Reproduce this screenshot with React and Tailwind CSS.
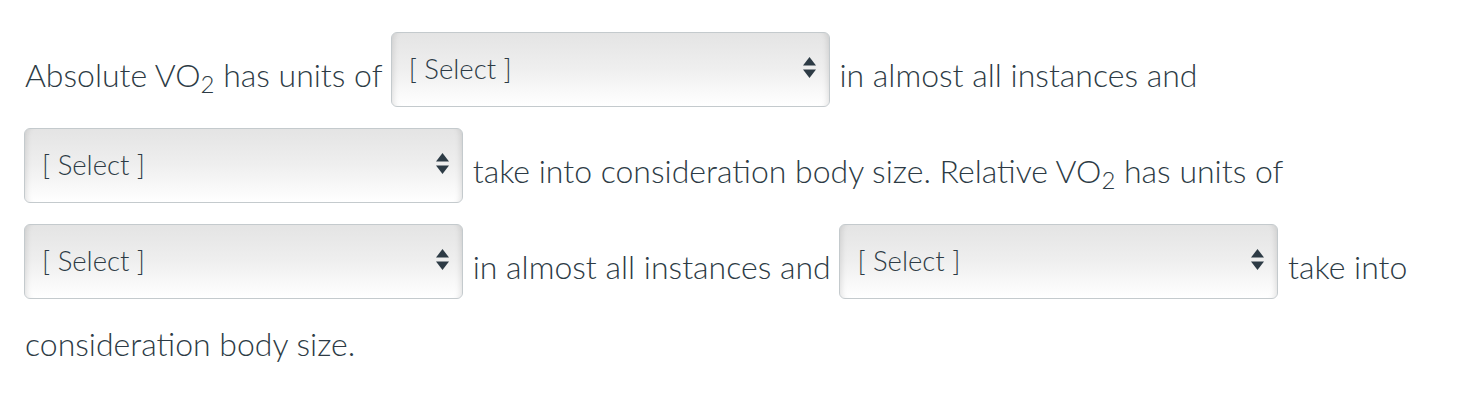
const Arrows = () => (
  <svg width="13" height="21" viewBox="0 0 13 21" className="absolute right-[13px] top-[24px]">
    <path d="M6.5 0 L13 8.5 L0 8.5 Z" fill="#2d3b45" />
    <path d="M0 12.5 L13 12.5 L6.5 21 Z" fill="#2d3b45" />
  </svg>
)

function Select({ first }) {
  return (
    <span
      className={
        (first ? 'ml-[-1px] ' : 'ml-0 ') +
        'relative mr-[1px] mb-[21px] inline-block h-[75px] w-[439px] rounded-[6px] border border-[#c4cacd] bg-gradient-to-b from-[#e4e4e4] via-[#efefef] to-white align-[-41px] shadow-[inset_7px_0_6px_-6px_rgba(0,0,0,0.13),inset_-7px_0_6px_-6px_rgba(0,0,0,0.13)]'
      }
    >
      <span className="absolute left-[17px] top-[22px] text-[27.5px] font-light leading-[28px] text-[#2d3b45]">[ Select ]</span>
      <Arrows />
    </span>
  )
}

export default function App() {
  return (
    <div className="min-h-screen bg-white px-[25px] pt-[32px]" style={{ fontFamily: 'Lato, "Noto Sans", sans-serif' }}>
      <p className="text-[32px] font-light leading-[48px] text-[#2d3b45]">
        Absolute VO<sub className="text-[24px]">2</sub> has units of <Select /> in almost all instances and{' '}
        <Select first /> take into consideration body size. Relative VO<sub className="text-[24px]">2</sub> has units of{' '}
        <Select first /> in almost all instances and <Select /> take into consideration body size.
      </p>
    </div>
  )
}
